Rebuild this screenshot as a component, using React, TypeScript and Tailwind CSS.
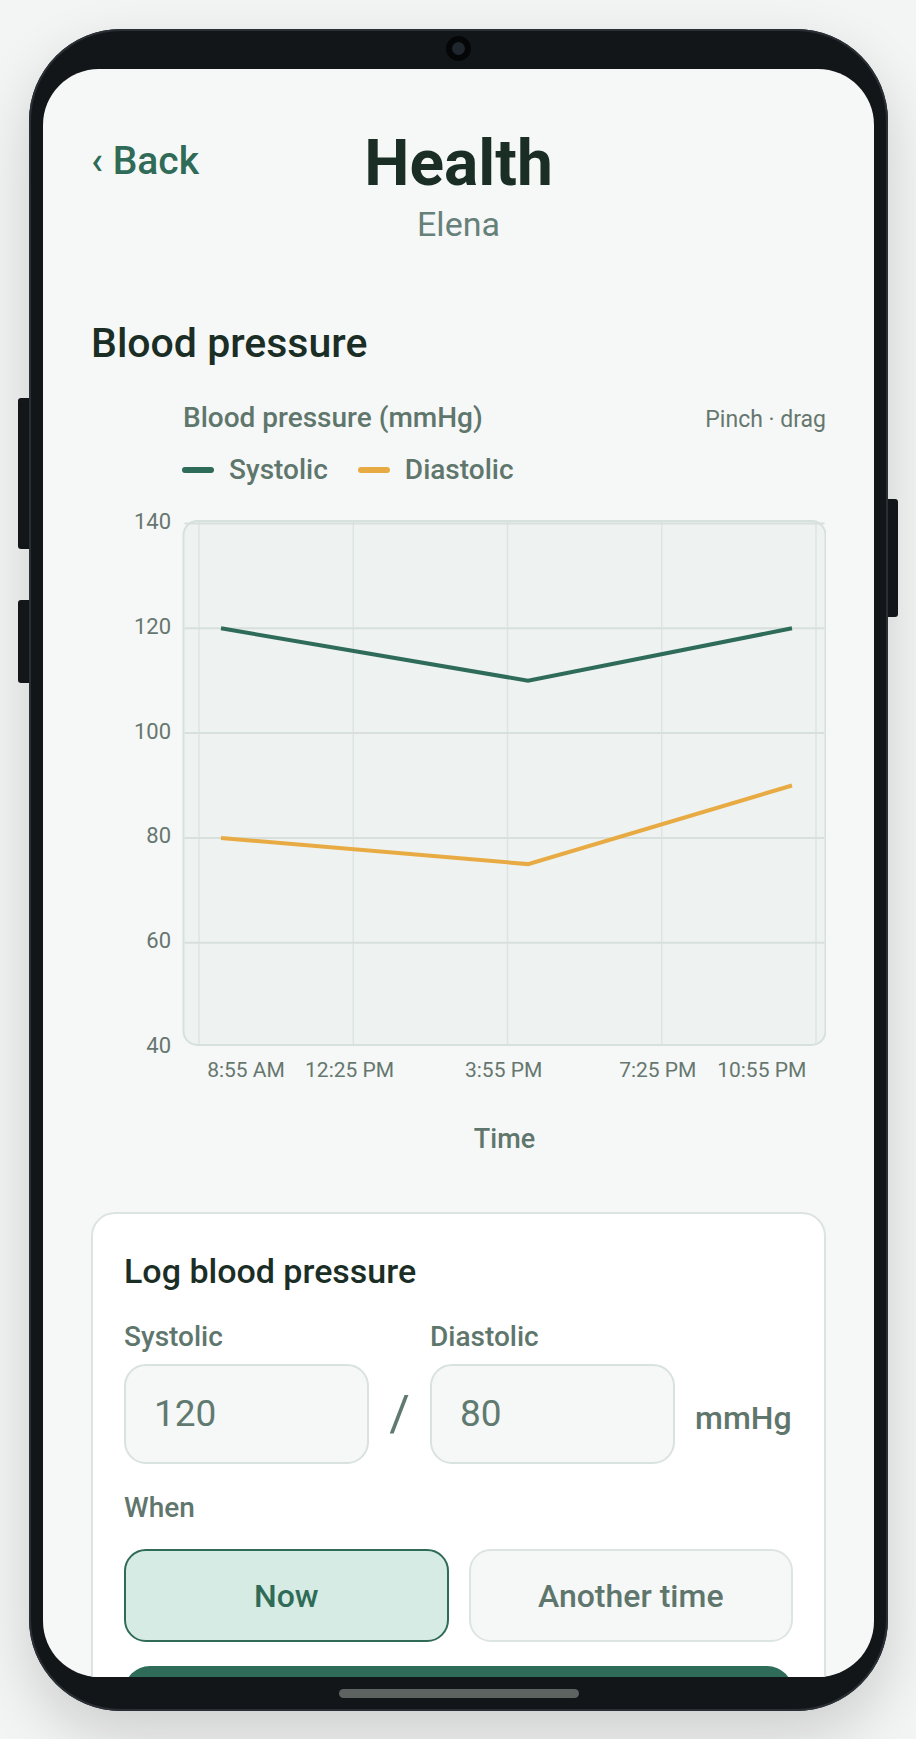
import React from "react";

const yTicks = [140, 120, 100, 80, 60, 40];
const xTicks = [
  { label: "8:55 AM", x: 155 },
  { label: "12:25 PM", x: 258.6 },
  { label: "3:55 PM", x: 412.6 },
  { label: "7:25 PM", x: 566.8 },
  { label: "10:55 PM", x: 670.7 },
];
const gridX = [108, 262.25, 416.5, 570.75, 725];

// value -> svg y
const yOf = (v: number) => 33.5 + (140 - v) * 5.24;

const systolic = [
  { x: 130, v: 120 },
  { x: 437, v: 110 },
  { x: 701, v: 120 },
];
const diastolic = [
  { x: 130, v: 80 },
  { x: 437, v: 75 },
  { x: 701, v: 90 },
];

function toPoints(data: { x: number; v: number }[]) {
  return data.map((d) => `${d.x},${yOf(d.v)}`).join(" ");
}

function Chart() {
  return (
    <svg width="735" height="600" viewBox="0 0 735 600" className="block" fontFamily="Roboto, sans-serif">
      <rect x="92.5" y="31" width="642" height="524" rx="14" fill="#eef2f0" stroke="#d6e0dc" strokeWidth="2" />
      {gridX.map((x) => (
        <line key={x} x1={x} x2={x} y1="32" y2="554" stroke="#dde5e2" strokeWidth="1.5" />
      ))}
      {yTicks.slice(0, 5).map((v) => (
        <line key={v} x1="93.5" x2="733.5" y1={yOf(v)} y2={yOf(v)} stroke="#d7e0dc" strokeWidth="2" />
      ))}
      <polyline points={toPoints(systolic)} fill="none" stroke="#2e6b58" strokeWidth="4" />
      <polyline points={toPoints(diastolic)} fill="none" stroke="#e8ab43" strokeWidth="4" />
      {yTicks.map((v) => (
        <text key={v} x="80" y={yOf(v) + 5.5} textAnchor="end" fontSize="22" fill="#66776f">
          {v}
        </text>
      ))}
      {xTicks.map((t) => (
        <text key={t.label} x={t.x} y="587" textAnchor="middle" fontSize="21" fill="#66776f">
          {t.label}
        </text>
      ))}
    </svg>
  );
}

export default function App() {
  return (
    <div className="w-[916px] h-[1739px] bg-[#f3f4f4] pt-[29px] pl-[29px] font-['Roboto',sans-serif]">
      <div className="relative w-[859px] h-[1682px] rounded-[92px] bg-[#121619] flex flex-col items-center pt-[7px] shadow-[inset_0_0_0_2px_#2a2f35,0_24px_60px_rgba(0,0,0,0.16)]">
        {/* side buttons */}
        <div className="absolute left-[-11px] top-[369px] w-[11px] h-[151px] rounded-l-[3px] bg-[#121619]" />
        <div className="absolute left-[-11px] top-[571px] w-[11px] h-[83px] rounded-l-[3px] bg-[#121619]" />
        <div className="absolute right-[-10px] top-[470px] w-[10px] h-[118px] rounded-r-[3px] bg-[#121619]" />

        {/* camera */}
        <div className="w-[25px] h-[25px] rounded-full bg-[#050607] flex items-center justify-center">
          <div className="w-[13px] h-[13px] rounded-full bg-[#1f262d]" />
        </div>

        {/* screen */}
        <div className="mt-[8px] w-[831px] h-[1608px] rounded-[56px] overflow-hidden bg-[#f6f8f7] px-[48px] pt-[63px]">
          <div className="grid grid-cols-[1fr_auto_1fr] items-start">
            <div className="mt-[5px] text-[39px] leading-[48px] font-medium text-[#2f6b57]">‹ Back</div>
            <div className="flex flex-col items-center">
              <div className="text-[64px] leading-[64px] font-bold text-[#1b2e26]">Health</div>
              <div className="mt-[8px] text-[34px] leading-[40px] text-[#66807a]">Elena</div>
            </div>
            <div />
          </div>

          <h2 className="mt-[73px] text-[41px] leading-[52px] font-medium text-[#1b2e26]">Blood pressure</h2>

          <div className="mt-[31px] pl-[92px] flex justify-between items-baseline">
            <div className="text-[28px] leading-[36px] font-medium text-[#5f766d]">Blood pressure (mmHg)</div>
            <div className="text-[23px] leading-[30px] text-[#66776f]">Pinch · drag</div>
          </div>

          <div className="mt-[16px] pl-[91px] flex items-center text-[28px] leading-[36px] font-medium text-[#5f766d]">
            <span className="w-[32px] h-[6px] rounded-full bg-[#2e6b58]" />
            <span className="ml-[15px]">Systolic</span>
            <span className="ml-[30px] w-[32px] h-[6px] rounded-full bg-[#e8ab43]" />
            <span className="ml-[15px]">Diastolic</span>
          </div>

          <div className="mt-[2px]">
            <Chart />
          </div>

          <div className="mt-[33px] pl-[92px] text-center text-[27px] leading-[32px] font-medium text-[#5f766d]">Time</div>

          <div className="mt-[57px] rounded-[24px] border-2 border-[#dce4e1] bg-white px-[31px] pt-[37px]">
            <h3 className="text-[34px] leading-[40px] font-medium text-[#1b2e26]">Log blood pressure</h3>

            <div className="mt-[28px] flex items-end">
              <div className="w-[245px]">
                <div className="text-[28px] leading-[36px] font-medium text-[#5f766d]">Systolic</div>
                <div className="mt-[9px] h-[100px] rounded-[22px] border-2 border-[#d9e2de] bg-[#f6f8f7] pl-[28px] flex items-center text-[37px] text-[#607a70]">
                  120
                </div>
              </div>
              <div className="w-[61px] h-[100px] flex items-center justify-center text-[50px] text-[#607a70]">/</div>
              <div className="w-[245px]">
                <div className="text-[28px] leading-[36px] font-medium text-[#5f766d]">Diastolic</div>
                <div className="mt-[9px] h-[100px] rounded-[22px] border-2 border-[#d9e2de] bg-[#f6f8f7] pl-[28px] flex items-center text-[37px] text-[#607a70]">
                  80
                </div>
              </div>
              <div className="ml-[20px] h-[100px] pt-[8px] flex items-center text-[32px] font-medium text-[#5f766d]">mmHg</div>
            </div>

            <div className="mt-[26px] text-[28px] leading-[36px] font-medium text-[#5f766d]">When</div>

            <div className="mt-[23px] grid grid-cols-2 gap-5">
              <button className="h-[93px] rounded-[22px] border-2 border-[#2f6b57] bg-[#d6ebe3] text-[32px] font-medium text-[#2f6b57]">
                Now
              </button>
              <button className="h-[93px] rounded-[22px] border-2 border-[#dde5e2] bg-[#f6f8f7] text-[32px] font-medium text-[#5f766d]">
                Another time
              </button>
            </div>

            <button aria-label="Save" className="mt-[24px] block w-full h-[92px] rounded-[26px] bg-[#2e6b58]" />
          </div>
        </div>

        {/* home indicator */}
        <div className="mt-[12px] w-[240px] h-[9px] rounded-full bg-[#5c6360]" />
      </div>
    </div>
  );
}
